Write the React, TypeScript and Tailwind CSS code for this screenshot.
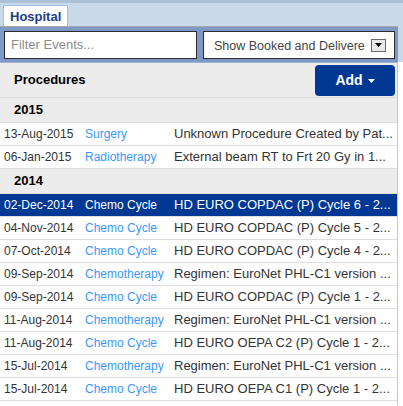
import React from 'react';

// --- TIPAGENS ---
interface Procedure {
    date: string;
    type: string;
    description: string;
    selected?: boolean;
}

interface YearGroup {
    year: string;
    items: Procedure[];
}

const groups: YearGroup[] = [
    {
        year: '2015',
        items: [
            { date: '13-Aug-2015', type: 'Surgery', description: 'Unknown Procedure Created by Pat...' },
            { date: '06-Jan-2015', type: 'Radiotherapy', description: 'External beam RT to Frt 20 Gy in 1...' },
        ],
    },
    {
        year: '2014',
        items: [
            { date: '02-Dec-2014', type: 'Chemo Cycle', description: 'HD EURO COPDAC (P) Cycle 6 - 2...', selected: true },
            { date: '04-Nov-2014', type: 'Chemo Cycle', description: 'HD EURO COPDAC (P) Cycle 5 - 2...' },
            { date: '07-Oct-2014', type: 'Chemo Cycle', description: 'HD EURO COPDAC (P) Cycle 4 - 2...' },
            { date: '09-Sep-2014', type: 'Chemotherapy', description: 'Regimen: EuroNet PHL-C1 version ...' },
            { date: '09-Sep-2014', type: 'Chemo Cycle', description: 'HD EURO COPDAC (P) Cycle 1 - 2...' },
            { date: '11-Aug-2014', type: 'Chemotherapy', description: 'Regimen: EuroNet PHL-C1 version ...' },
            { date: '11-Aug-2014', type: 'Chemo Cycle', description: 'HD EURO OEPA C2 (P) Cycle 1 - 2...' },
            { date: '15-Jul-2014', type: 'Chemotherapy', description: 'Regimen: EuroNet PHL-C1 version ...' },
            { date: '15-Jul-2014', type: 'Chemo Cycle', description: 'HD EURO OEPA C1 (P) Cycle 1 - 2...' },
        ],
    },
];

// --- COMPONENTES FILHO ---
const ProcedureRow: React.FC<{ item: Procedure }> = ({ item }) => (
    <div
        className={`flex items-center h-[23px] border-b border-[#dedede] whitespace-nowrap ${
            item.selected ? 'bg-[#003893] text-white' : 'bg-white text-[#333]'
        }`}
    >
        <span className="w-[85px] pl-[4px] shrink-0 text-[12px]">{item.date}</span>
        <span className={`w-[89px] shrink-0 text-[12px] ${item.selected ? 'text-white' : 'text-[#3a97ff]'}`}>{item.type}</span>
        <span className="flex-1 min-w-0 text-[13px]">{item.description}</span>
    </div>
);

const YearHeader: React.FC<{ year: string }> = ({ year }) => (
    <div className="h-[25px] flex items-center pl-[14px] bg-[#ececec] border-b border-[#dedede] text-[13px] font-bold text-black">
        {year}
    </div>
);

// --- COMPONENTE PRINCIPAL ---
export default function App() {
    return (
        <div className="w-[403px] h-[406px] overflow-hidden bg-white font-['Liberation_Sans',Arial,sans-serif]">
            {/* Barra de abas */}
            <div className="h-[3px] bg-[#a9c0d6]" />
            <div className="h-[23px] bg-[#c9d9ea] flex items-end pl-[3px]">
                <div className="h-[21px] px-[6px] bg-white border border-b-0 border-[#a2c0e6] text-[13px] font-bold text-[#1d3c86] leading-[21px]">
                    Hospital
                </div>
            </div>

            {/* Filtros */}
            <div className="bg-[#c9d9ea]">
                <div className="w-[398px] h-[36px] bg-[#7e99c7] border-t border-[#a8a8a8] flex items-center gap-[6px] pl-[4px]">
                    <input
                        type="text"
                        placeholder="Filter Events..."
                        className="w-[193px] h-[28px] bg-white border border-[#2b2b2b] px-[6px] text-[13px] text-[#333] placeholder-[#8c8c8c] outline-none"
                    />
                    <div className="w-[192px] h-[28px] bg-white border border-[#2b2b2b] flex items-center pl-[10px] pr-[8px] pt-[3px] text-[12.5px] text-[#454545] whitespace-nowrap">
                        <span className="flex-1">Show Booked and Delivere</span>
                        <span className="w-[15px] h-[13px] border border-[#6a6a6a] bg-[#e9e9e9] flex items-center justify-center shrink-0 mb-[2px]">
                            <svg width="7" height="4" viewBox="0 0 7 4">
                                <path d="M0 0 H7 L3.5 4 Z" fill="#000" />
                            </svg>
                        </span>
                    </div>
                </div>
            </div>

            {/* Lista de procedimentos */}
            <div className="w-[398px] border-r border-[#c8c8c8] h-full border-t border-t-[#9fb2cf]">
                <div className="h-[35px] bg-[#ececec] border-b border-[#dedede] flex items-center justify-between pl-[14px] pr-[2px]">
                    <span className="text-[13px] font-bold text-black">Procedures</span>
                    <button className="w-[80px] h-[31px] mt-[1px] rounded-[4px] bg-[#003893] text-white text-[14px] font-bold flex items-center justify-center gap-[5px]">
                        Add
                        <svg width="7" height="4" viewBox="0 0 7 4">
                            <path d="M0 0 H7 L3.5 4 Z" fill="#fff" />
                        </svg>
                    </button>
                </div>
                {groups.map(group => (
                    <div key={group.year}>
                        <YearHeader year={group.year} />
                        {group.items.map((item, i) => (
                            <ProcedureRow key={i} item={item} />
                        ))}
                    </div>
                ))}
            </div>
        </div>
    );
}
